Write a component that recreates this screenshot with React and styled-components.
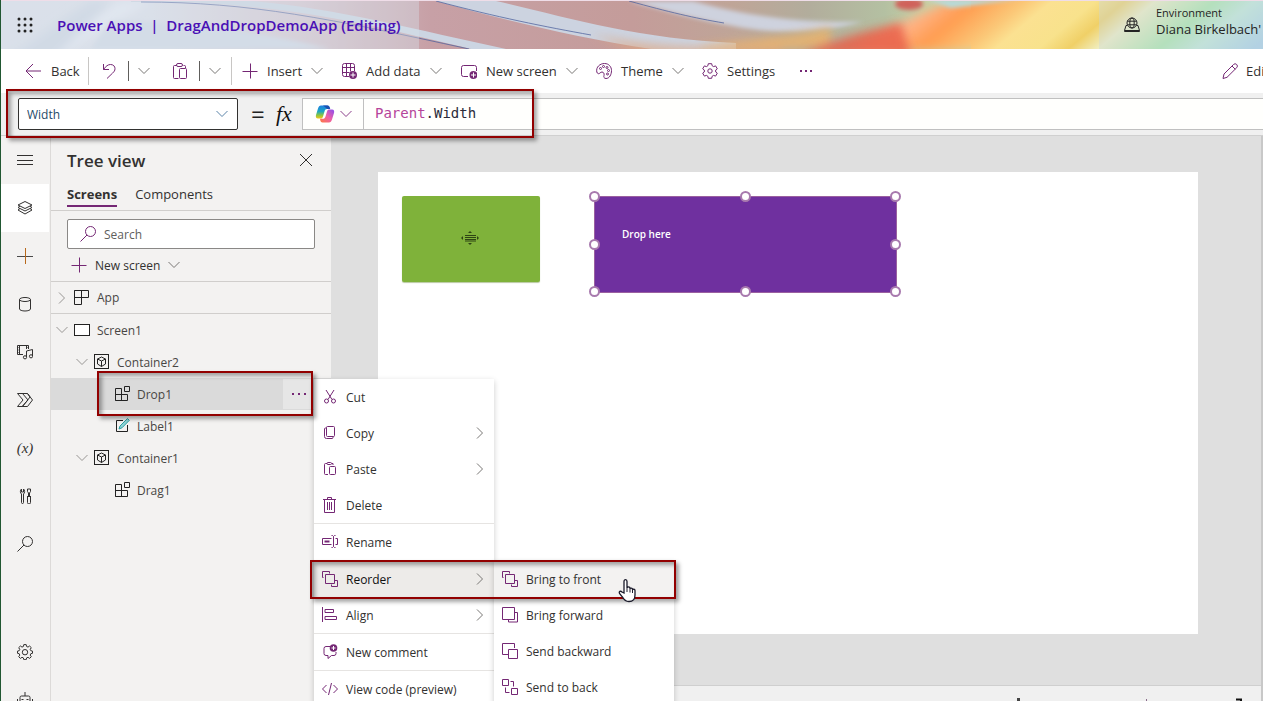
import React from "react";
import styled, { createGlobalStyle, css } from "styled-components";

const Global = createGlobalStyle`
  * { box-sizing: border-box; }
  body { margin: 0; font-family: "Open Sans", "Noto Sans", sans-serif; color: #323130; }
  button, input, select { font: inherit; color: inherit; }
  button { background: none; border: 0; padding: 0; text-align: left; }
`;

const purple = "#742774";

/* ---------- icons ---------- */

const Svg = styled.svg`
  display: block;
  flex: none;
  fill: none;
  stroke: ${(p) => p.$color || "currentColor"};
  stroke-width: 1;
`;

const shapes = {
  waffle: (
    <g fill="#222" stroke="none">
      {[2, 8, 14].map((y) => [2, 8, 14].map((x) => <circle key={x + "-" + y} cx={x} cy={y} r="1.5" />))}
    </g>
  ),
  back: <path d="M16 8H1M8 1 1 8l7 7" />,
  undo: <path d="M1.500 1v5.500H7M1.500 6.500C4 3 6 1.500 8.500 1.500c3 0 4.500 2 4.500 4.200 0 2-1 3-2.500 4.500L5 15.500" />,
  clipboard: (
    <g>
      <path d="M4.500 2.500H2.500a1 1 0 0 0-1 1v11a1 1 0 0 0 1 1h4M11.500 2.500h1a1 1 0 0 1 1 1V5" />
      <rect x="4.500" y="0.500" width="6" height="3" rx="1.500" />
      <rect x="7.500" y="5.500" width="7" height="10" rx="1" />
    </g>
  ),
  plus: <path d="M8.500 .5v15M.5 8.500h15" />,
  railPlus: (
    <g>
      <path d="M0 8.500h16" stroke="#4a4a4a" />
      <path d="M8.500 0v16" stroke="#b8691c" />
    </g>
  ),
  table: (
    <g>
      <path d="M8 13.500H3.500a2 2 0 0 1-2-2v-9a2 2 0 0 1 2-2h8a2 2 0 0 1 2 2V8M5.500 .5v13M9.500 .5v8M1.500 4.500h12M1.500 9.500h7" />
      <circle cx="12" cy="12" r="4" fill={purple} stroke="none" />
      <path d="M12 9.500v5M9.500 12h5" stroke="#fff" />
    </g>
  ),
  screenAdd: (
    <g>
      <path d="M7 13.500H2.500a2 2 0 0 1-2-2v-7a2 2 0 0 1 2-2h11a2 2 0 0 1 2 2V8" />
      <circle cx="12.500" cy="12" r="4" fill={purple} stroke="none" />
      <path d="M12.500 9.500v5M10 12h5" stroke="#fff" />
    </g>
  ),
  theme: (
    <g>
      <path d="M.8 9C-.2 4 4 .5 8.500 .5c4.500 0 7 3.500 7 7 0 4-2 8-5.500 8-2 0-2.500-1.500-2-3 .5-2-.5-3.500-2-3.500S3.500 11 2.300 10.700C1.500 10.500 1 9.700 .8 9Z" />
      <circle cx="4.500" cy="5.500" r="1" /><circle cx="7.500" cy="3.500" r="1" />
      <circle cx="11" cy="4.500" r="1" /><circle cx="12.500" cy="7.500" r="1" /><circle cx="11.500" cy="11" r="1" />
    </g>
  ),
  gear: (
    <g>
      <path d="M6.300 .7h3.400l.4 2 1.500.9 2-.7 1.700 2.900L13.700 7v2l1.600 1.200-1.700 2.900-2-.7-1.500.9-.4 2H6.300l-.4-2-1.500-.9-2 .7L.7 10.200 2.300 9V7L.7 5.800l1.700-2.900 2 .7 1.500-.9Z" strokeLinejoin="round" />
      <circle cx="8" cy="8" r="2.200" />
    </g>
  ),
  cog: (
    <g>
      <path d="M6.800 .6h2.400l.4 1.900 1.400.6 1.600-1.100 1.700 1.700-1.100 1.600.6 1.400 1.700.4v2.200l-1.700.4-.6 1.400 1.100 1.600-1.700 1.700-1.600-1.100-1.400.6-.4 1.800H6.800l-.4-1.800-1.400-.6-1.600 1.100-1.700-1.700 1.100-1.600-.6-1.400L.5 9.300V7.100l1.700-.4.6-1.400-1.100-1.600L3.400 2 5 3.100l1.400-.6Z" strokeLinejoin="round" />
      <circle cx="8" cy="8.200" r="2.700" />
    </g>
  ),
  pencil: <path d="M1 15.500 2 11 11.500 1.500a2 2 0 0 1 3.200 3.200L5 14.300ZM10 3l3.300 3.300" />,
  globe: (
    <g>
      <circle cx="8" cy="6" r="5" />
      <ellipse cx="8" cy="6" rx="2.200" ry="5" />
      <path d="M3.500 4.200h9M3.500 7.800h9M3.200 8.500H2L.5 13.500h15L14 8.500h-1.200M.5 13.500v1h15v-1" />
    </g>
  ),
  menu: <path d="M0 3.500h16M0 8.500h16M0 12.500h16" />,
  layers: (
    <path d="M8 1.500 15 5 8 8.500 1 5ZM3 6 1 7.500 8 11l7-3.500L13 6M3 8.500 1 10l7 4 7-4-2-1.500" />
  ),
  database: (
    <g>
      <ellipse cx="8" cy="3.500" rx="5.500" ry="2" />
      <path d="M2.500 3.500v9.500c0 1 2.500 2 5.500 2s5.500-1 5.500-2V3.500" />
    </g>
  ),
  media: (
    <g>
      <path d="M6 10.500H.5v-9h11V5M2.500 1.500v9M9.500 1.500V5" />
      <path d="M.5 3.500h2M.5 6h2M.5 8.500h2M9.500 3.500h2" strokeDasharray="1 1" />
      <path d="M9.500 13V7l6-1.500V12" />
      <circle cx="8" cy="13.300" r="1.600" /><circle cx="14" cy="12.300" r="1.600" />
    </g>
  ),
  flow: <path d="M.5 1.500h10L15.500 8l-5 6.500H.5L6 8ZM5 14.500 11 8 5.500 1.500M10.500 1.500 13 5 6 14" />,
  tools: (
    <path d="M6.500 6v8.500a1 1 0 0 1-2 0V6C3 5 3 2 4.500 1v3h2V1C8 2 8 5 6.500 6ZM11.500 8V5L10.500 3.500V1h3v2.500L12.500 5v3M10 8.500h4M10.500 8.500v6a1.500 1.500 0 0 0 3 0v-6" />
  ),
  search: (
    <g>
      <circle cx="10.500" cy="5.500" r="5" />
      <path d="M7 9 .5 15.500" />
    </g>
  ),
  bot: (
    <g>
      <path d="M8 0v4M3 8V5.500a1.500 1.500 0 0 1 1.500-1.500h7A1.500 1.500 0 0 1 13 5.500V12H3ZM.5 7v3M15.500 7v3" />
      <path d="M5.500 7v1M10.500 7v1" strokeWidth="2" />
    </g>
  ),
  close: <path d="M2 2l12 12M14 2 2 14" />,
  app: <path d="M.5 .5h14v7H.5ZM.5 .5v14h7V.5" />,
  screen: <rect x=".5" y="2.500" width="15" height="11" fill="#fff" />,
  container: (
    <g>
      <rect x=".5" y=".5" width="14" height="14" />
      <path d="M7.500 3 11.500 5v5l-4 2.500L3.500 10V5ZM3.500 5l4 2 4-2M7.500 7v5.500" />
    </g>
  ),
  component: <path d="M1.500 2.500h6v12h-6ZM1.500 8.500h12v6h-12M10.500 .5h5v5h-5Z" />,
  label: (
    <g>
      <path d="M9 2.500H2.500v11h11V7" />
      <path d="M5 11l1-3 7.500-7.500 1.800 1.800L8 9.800Z" stroke="#2aa0a4" fill="#8fd3d5" />
    </g>
  ),
  cut: (
    <g>
      <path d="M4 1l6 9.500M12 1 6 10.500" />
      <circle cx="4.500" cy="12" r="2" /><circle cx="11.500" cy="12" r="2" />
    </g>
  ),
  copy: (
    <g>
      <rect x="4.500" y="1.500" width="8" height="10" rx="1" />
      <path d="M4.500 3h-1a1 1 0 0 0-1 1v7.500a2 2 0 0 0 2 2H10a1 1 0 0 0 1-1v-1" />
    </g>
  ),
  paste: (
    <g>
      <path d="M5 2.500H3.500a1 1 0 0 0-1 1v9a1 1 0 0 0 1 1H6M10 2.500h1V4" />
      <rect x="5" y="1.500" width="4.500" height="2" rx="1" />
      <rect x="7.500" y="5.500" width="6" height="8" rx="1" />
    </g>
  ),
  trash: <path d="M1 2.500h13M5.500 2.500v-2h4v2M2.500 2.500v13h10v-13M5.500 5v8M7.500 5v8M9.500 5v8" />,
  rename: (
    <g>
      <path d="M9.500 4.500h-9v6h9M13.500 4.500h2v6h-2M9.500 1.500h1l1 1 1-1h1M9.500 13.500h1l1-1 1 1h1M11.500 2.500v10" />
      <path d="M2.500 7.500h5" strokeWidth="2" />
    </g>
  ),
  toFront: <path d="M3.500 3.500h9v9h-9ZM1.500 6.500H.5v-6h7v2M12.500 9.500h3v6h-6v-2" />,
  forward: <path d="M.5 .5h12v12H.5ZM13 5.500h2.500v9.500H6.500v-2" />,
  backward: <path d="M6 11.500H.5v-11h12V5M6.500 6.500h9v9h-9Z" />,
  toBack: <path d="M.5 .5h6v6h-6ZM9.500 9.500h6v6h-6ZM8.500 2.500h3v5M3.500 8.500v5h4" />,
  align: <path d="M.5 0v15M3 2.500h8.500v3H3M3 9.500h11.500v3H3M3 2.500v3M3 9.500v3" />,
  comment: (
    <g>
      <path d="M8 2.500H4a2 2 0 0 0-2 2v5a2 2 0 0 0 2 2h2v3l3.500-3H12a2 2 0 0 0 2-2V8" />
      <circle cx="11.500" cy="4" r="3.800" fill={purple} stroke="none" />
      <path d="M11.500 2v4M9.500 4h4" stroke="#fff" />
    </g>
  ),
  code: <path d="M4.500 4 .5 8l4 4M11.500 4l4 4-4 4M9.500 2l-3 12" />,
};

const Icon = ({ name, size = 16, color }) => (
  <Svg viewBox="0 0 16 16" width={size} height={size} $color={color} aria-hidden="true">
    {shapes[name]}
  </Svg>
);

const ChevronDown = ({ color = "#797775", size = 12 }) => (
  <Svg viewBox="0 0 12 12" width={size} height={size} $color={color} aria-hidden="true">
    <path d="M.5 3 6 8.500 11.500 3" />
  </Svg>
);
const ChevronRight = ({ color = "#797775", size = 12 }) => (
  <Svg viewBox="0 0 12 12" width={size} height={size} $color={color} aria-hidden="true">
    <path d="M3 .5 8.500 6 3 11.500" />
  </Svg>
);
const Dots = ({ gap = 4, color = purple }) => (
  <Svg viewBox="0 0 16 16" width="16" height="16" aria-hidden="true">
    {[-1, 0, 1].map((i) => (
      <rect key={i} x={7 + i * (gap + 2)} y="7" width="2" height="2" fill={color} stroke="none" />
    ))}
  </Svg>
);

const Copilot = () => (
  <svg width="20" height="20" viewBox="0 0 20 20" aria-hidden="true">
    <defs>
      <linearGradient id="cpBlue" x1="0" y1="0" x2="0" y2="1">
        <stop offset="0" stopColor="#1f7fe0" /><stop offset=".45" stopColor="#1aa6c4" />
        <stop offset=".75" stopColor="#8cc63f" /><stop offset="1" stopColor="#f5c518" />
      </linearGradient>
      <linearGradient id="cpPink" x1="1" y1="0" x2="0" y2="1">
        <stop offset="0" stopColor="#8a4df0" /><stop offset=".5" stopColor="#ee5fa6" />
        <stop offset="1" stopColor="#ff7a3d" />
      </linearGradient>
    </defs>
    <path d="M6 1.500h6.500c1.200 0 1.800.7 2.200 2l.5 1.500h-3c-1.500 0-2.200.8-2.700 2.400L8 12.500c-.5 1.500-1 2-2.500 2H3c-2 0-2.500-1.600-2-3.500L3 4.500C3.600 2.500 4.500 1.500 6 1.500Z" fill="url(#cpBlue)" />
    <path d="M14 18.500H7.500c-1.200 0-1.800-.7-2.200-2L5 14.800h2.800c1.500 0 2.200-.8 2.700-2.300L12 7.500c.5-1.500 1-2 2.500-2H17c2 0 2.500 1.600 2 3.500l-2 6.500c-.6 2-1.500 3-3 3Z" fill="url(#cpPink)" />
    <path d="M8 1.500h4.500c1.200 0 1.800.7 2.200 2l.5 1.500h-3L10 3Z" fill="#1c4fb0" />
  </svg>
);

/* ---------- page ---------- */

const Page = styled.div`
  position: relative;
  display: flex;
  flex-direction: column;
  height: 100vh;
  overflow: hidden;
  border-left: 1px solid #215732;
  background: #f0f0f0;
`;

const Header = styled.header`
  position: relative;
  display: flex;
  align-items: center;
  flex: none;
  height: 49px;
  border-top: 1px solid #efdde8;
  overflow: hidden;
`;
const Banner = styled.svg`
  position: absolute;
  inset: 0;
  width: 100%;
  height: 100%;
`;
const Waffle = styled.button`
  position: relative;
  margin: 0 24px 0 16px;
`;
const AppTitle = styled.h1`
  position: relative;
  margin: 0;
  flex: 1;
  font-size: 15px;
  line-height: 24px;
  font-weight: 600;
  color: #4a10b5;
  white-space: pre;
`;
const Environment = styled.div`
  position: relative;
  display: flex;
  align-items: center;
  gap: 16px;
  width: 164px;
  height: 100%;
  padding-left: 25px;
  background: rgba(200, 215, 220, 0.4);
  color: #242424;
  white-space: nowrap;
`;
const EnvText = styled.div`
  padding-bottom: 8px;
  font-size: 13px;
  line-height: 16px;
  small { display: block; font-size: 11px; line-height: 16px; }
`;

const Toolbar = styled.nav`
  display: flex;
  align-items: center;
  flex: none;
  height: 44px;
  padding-left: 24px;
  background: #fff;
`;
const Command = styled.button`
  display: flex;
  align-items: center;
  flex: none;
  gap: ${(p) => p.$gap || 9}px;
  width: ${(p) => p.$width}px;
  height: 32px;
  font-size: 13px;
  line-height: 20px;
  white-space: nowrap;
`;
const Rule = styled.span`
  flex: none;
  width: 1px;
  height: ${(p) => (p.$short ? 20 : 28)}px;
  margin-right: ${(p) => p.$after}px;
  background: ${(p) => (p.$short ? "#605e5c" : "#c8c6c4")};
`;
const Spacer = styled.span`
  flex: 1;
`;

const FormulaBar = styled.div`
  display: flex;
  align-items: center;
  flex: none;
  height: 43px;
  padding: 0 0 1px 17px;
  background: #f0f0f0;
  border-bottom: 1px solid #d0d0d0;
`;
const Property = styled.label`
  display: grid;
  align-items: center;
  flex: none;
  width: 220px;
  svg { grid-area: 1 / 1; justify-self: end; margin-right: 10px; pointer-events: none; }
`;
const PropertySelect = styled.select`
  grid-area: 1 / 1;
  height: 32px;
  padding: 2px 8px 0;
  appearance: none;
  border: 1px solid #323130;
  border-radius: 2px;
  background: #fff;
  font-size: 12px;
  color: #1f4a68;
`;
const Equals = styled.span`
  width: 38px;
  padding-left: 13px;
  font-size: 24px;
  line-height: 24px;
  color: #222;
`;
const Fx = styled.span`
  width: 26px;
  font-family: "Liberation Serif", serif;
  font-style: italic;
  font-size: 22px;
  line-height: 24px;
  color: #111;
`;
const CopilotButton = styled.button`
  display: flex;
  align-items: center;
  justify-content: center;
  gap: 5px;
  flex: none;
  width: 62px;
  height: 32px;
  border: 1px solid #c0c0c0;
  background: #fffffd;
`;
const Formula = styled.div`
  flex: 1;
  height: 32px;
  padding-left: 11px;
  border: solid #c0c0c0;
  border-width: 1px 0;
  background: #fffffd;
  font-family: "DejaVu Sans Mono", monospace;
  font-size: 14px;
  line-height: 29px;
  color: #2b2b3a;
  outline: 0;
  span { color: #b5449a; }
`;

const Body = styled.div`
  display: flex;
  flex: 1;
  min-height: 0;
`;
const Rail = styled.nav`
  flex: none;
  width: 50px;
  overflow: hidden;
  background: #f3f2f1;
  border-right: 1px solid #dcdad8;
`;
const RailButton = styled.button`
  display: flex;
  align-items: center;
  justify-content: center;
  width: 48px;
  height: 48px;
  margin-top: ${(p) => (p.$apart ? 60 : 0)}px;
  background: ${(p) => (p.$active ? "#fff" : "transparent")};
  font-family: "Liberation Serif", serif;
  font-size: 15px;
  line-height: 16px;
  font-style: italic;
`;

const Tree = styled.aside`
  flex: none;
  width: 280px;
  background: #f3f2f1;
`;
const TreeHead = styled.div`
  display: flex;
  align-items: center;
  justify-content: space-between;
  height: 48px;
  padding: 0 17px 0 16px;
`;
const TreeTitle = styled.h2`
  margin: 0;
  padding-top: 2px;
  font-size: 17px;
  line-height: 24px;
  font-weight: 600;
`;
const Tabs = styled.div`
  display: flex;
  align-items: flex-start;
  gap: 18px;
  height: 27px;
  padding-left: 16px;
  border-bottom: 1px solid #d0cecc;
`;
const Tab = styled.button`
  height: 23px;
  font-size: 13px;
  line-height: 21px;
  border-bottom: 2px solid ${(p) => (p.$active ? purple : "transparent")};
  font-weight: ${(p) => (p.$active ? 700 : 400)};
`;
const SearchBox = styled.label`
  display: flex;
  align-items: center;
  gap: 8px;
  height: 30px;
  margin: 8px 16px 0;
  padding: 0 12px;
  border: 1px solid #8a8886;
  border-radius: 2px;
  background: #fff;
`;
const SearchInput = styled.input`
  flex: 1;
  min-width: 0;
  padding: 0;
  border: 0;
  outline: 0;
  background: none;
  font-size: 12px;
  &::placeholder { color: #605e5c; opacity: 1; }
`;
const NewScreen = styled.button`
  display: flex;
  align-items: center;
  gap: 8px;
  width: 100%;
  height: 33px;
  padding-left: 20px;
  border-bottom: 1px solid #d0cecc;
  font-size: 12px;
`;
const TreeRow = styled.div`
  display: flex;
  align-items: center;
  height: 32px;
  padding-left: ${(p) => 5 + p.$level * 20}px;
  font-size: 12px;
  color: #484644;
  ${(p) => p.$ruled && css`border-bottom: 1px solid #d0cecc;`}
  ${(p) => p.$selected && css`background: #dadada;`}
`;
const Toggle = styled.span`
  width: 18px;
`;
const RowName = styled.span`
  flex: 1;
  padding-left: 7px;
`;
const RowMore = styled.button`
  display: flex;
  align-items: center;
  width: 48px;
  height: 30px;
  padding-left: 8px;
  background: #e6e6e6;
`;

const Work = styled.main`
  display: flex;
  flex-direction: column;
  flex: 1;
  min-width: 0;
  border-right: 2px solid #c8c8c8;
`;
const Canvas = styled.div`
  display: flex;
  flex: 1;
  padding: 36px 63px 51px 47px;
  background: #dfdfdf;
`;
const Artboard = styled.div`
  display: flex;
  align-items: flex-start;
  gap: 54px;
  flex: 1;
  padding: 24px;
  background: #fff;
`;
const DragCard = styled.div`
  display: flex;
  align-items: center;
  justify-content: center;
  width: 138px;
  height: 86px;
  padding: 0 2px 2px 0;
  border-radius: 2px;
  background: #7fb23a;
  box-shadow: 0 1px 1px #b8c8a0;
`;
const DropZone = styled.div`
  position: relative;
  width: 303px;
  height: 97px;
  padding: 27px;
  border: 1px solid #9a60a0;
  background: #6f309f;
  font-size: 10px;
  line-height: 20px;
  font-weight: 600;
  color: #fff;
`;
const Handle = styled.span`
  position: absolute;
  left: ${(p) => p.$x}%;
  top: ${(p) => p.$y}%;
  width: 11px;
  height: 11px;
  margin: -6px;
  border: 2px solid #a87aae;
  border-radius: 50%;
  background: #fff;
`;
const Status = styled.footer`
  display: flex;
  justify-content: flex-end;
  flex: none;
  height: 16px;
  border-top: 1px solid #cfcfcf;
  background: #f0f0f0;
`;

/* ---------- menus and overlays ---------- */

const Menu = styled.div`
  position: absolute;
  left: ${(p) => p.$left}px;
  top: ${(p) => p.$top}px;
  width: 180px;
  background: #fff;
  box-shadow: 0 2px 6px rgba(0, 0, 0, 0.2);
`;
const MenuItem = styled.button`
  display: flex;
  align-items: center;
  gap: 8px;
  width: 100%;
  height: 36px;
  padding: 0 8px;
  font-size: 12px;
  background: ${(p) => (p.$active ? p.$tint || "#edebe9" : "transparent")};
  color: ${(p) => (p.$active && !p.$tint ? "#111" : "#323130")};
  span { flex: 1; }
`;
const MenuRule = styled.div`
  height: 1px;
  background: #e6e4e2;
`;
const Highlight = styled.div`
  position: absolute;
  left: ${(p) => p.$left}px;
  top: ${(p) => p.$top}px;
  width: ${(p) => p.$width}px;
  height: ${(p) => p.$height}px;
  border: 2px solid #920000;
  box-shadow: 3px 3px 4px rgba(0, 0, 0, 0.35), inset 3px 3px 4px rgba(0, 0, 0, 0.35);
  pointer-events: none;
`;
const Cursor = styled.svg`
  position: absolute;
  left: 615px;
  top: 578px;
`;

const BannerArt = () => (
  <Banner viewBox="0 0 1262 48" preserveAspectRatio="none" aria-hidden="true">
    <defs>
      <linearGradient id="base">
        <stop offset="0" stopColor="#dce0e9" /><stop offset=".12" stopColor="#dcdfe8" />
        <stop offset=".24" stopColor="#d5c5cd" /><stop offset=".34" stopColor="#c7a0a6" />
        <stop offset=".5" stopColor="#c49c9a" /><stop offset=".58" stopColor="#bfa598" />
        <stop offset=".64" stopColor="#b2ad9c" /><stop offset=".7" stopColor="#b4c0a2" />
        <stop offset=".73" stopColor="#c6cfa4" /><stop offset="1" stopColor="#bcdedd" />
      </linearGradient>
      <linearGradient id="glow" gradientUnits="userSpaceOnUse" x1="880" y1="0" x2="1056" y2="211">
        <stop offset="0" stopColor="#e88a68" /><stop offset=".06" stopColor="#fba488" />
        <stop offset=".13" stopColor="#ffb488" /><stop offset=".22" stopColor="#ff9c50" />
        <stop offset=".34" stopColor="#fbc878" /><stop offset=".4" stopColor="#fbe191" />
        <stop offset=".5" stopColor="#f8e28c" /><stop offset=".57" stopColor="#f0d067" />
        <stop offset=".64" stopColor="#f0eec0" />
        <stop offset=".78" stopColor="#a8e6a8" /><stop offset=".87" stopColor="#bfe8d8" />
        <stop offset="1" stopColor="#a5cee8" />
      </linearGradient>
      <filter id="soft" x="-20%" y="-50%" width="140%" height="200%"><feGaussianBlur stdDeviation="5" /></filter>
      <filter id="edge" x="-20%" y="-50%" width="140%" height="200%"><feGaussianBlur stdDeviation="2" /></filter>
    </defs>
    <rect width="1262" height="48" fill="url(#base)" />
    <path d="M120 0 0 60h50L150 0Z" fill="#e6eaf3" filter="url(#soft)" />
    <path d="M0 60 90 0h20L50 60Z" fill="#cdd6e2" filter="url(#soft)" />
    <path d="M110 20C190 20 260 32 330 48H90Z" fill="#d0d9e5" filter="url(#edge)" />
    <path d="M130 0h120C330 6 420 30 505 48H470C400 32 330 12 230 4 200 1 160 1 130 1Z" fill="#ccd5e2" />
    <path d="M435 0h60c70 16 140 38 240 42v6H650C570 36 500 18 435 0Z" fill="#ccd3e0" />
    <path d="M590 33c60 14 120 16 190 8v14H640Z" fill="#e0a882" opacity=".7" filter="url(#soft)" />
    <path d="M628 0h64c50 14 100 22 170 21-50 12-90 12-130 4-35-6-70-16-104-25Z" fill="#ced2de" filter="url(#edge)" />
    <path d="M140 1c110 0 190 17 328 47M435 0c60 16 110 26 155 34M628 0c40 11 65 17 95 22" fill="none" stroke="#4c609c" strokeWidth="1" opacity=".75" />
    <path d="M700 46c50-8 90-10 130-20v22H700Z" fill="#eab36d" opacity=".85" filter="url(#soft)" />
    <path d="M950 0C920 12 890 26 850 50h425V0Z" fill="url(#glow)" filter="url(#soft)" />
    <rect x="970" width="292" height="48" fill="url(#glow)" />
    <path d="M800 54c40-18 70-26 100-32l10 32Z" fill="#e8604a" opacity=".85" filter="url(#soft)" />
    <ellipse cx="908" cy="3" rx="14" ry="6" fill="#d0625c" filter="url(#edge)" />
    <path d="M925 -2h95l-70 9Z" fill="#b8dad8" filter="url(#edge)" />
    <rect width="418" height="48" fill="#d8e2ec" opacity=".4" />
  </Banner>
);

const commands = [
  { icon: "plus", label: "Insert", width: 99, menu: true },
  { icon: "table", label: "Add data", width: 120, menu: true },
  { icon: "screenAdd", label: "New screen", width: 135, menu: true },
  { icon: "theme", label: "Theme", width: 106, menu: true },
  { icon: "gear", label: "Settings", width: 96 },
];

const rail = [
  { icon: "menu", label: "Expand" },
  { icon: "layers", label: "Tree view", active: true },
  { icon: "railPlus", label: "Insert" },
  { icon: "database", label: "Data" },
  { icon: "media", label: "Media" },
  { icon: "flow", label: "Power Automate" },
  { text: "(x)", label: "Variables" },
  { icon: "tools", label: "Advanced tools" },
  { icon: "search", label: "Search" },
  { icon: "cog", label: "Settings", apart: true },
  { icon: "bot", label: "Virtual agent" },
];

const tree = [
  { level: 0, toggle: "closed", icon: "app", name: "App", ruled: true },
  { level: 0, toggle: "open", icon: "screen", name: "Screen1" },
  { level: 1, toggle: "open", icon: "container", name: "Container2" },
  { level: 2, icon: "component", name: "Drop1", selected: true },
  { level: 2, icon: "label", name: "Label1" },
  { level: 1, toggle: "open", icon: "container", name: "Container1" },
  { level: 2, icon: "component", name: "Drag1" },
];

const menu = [
  { icon: "cut", label: "Cut" },
  { icon: "copy", label: "Copy", sub: true },
  { icon: "paste", label: "Paste", sub: true },
  { icon: "trash", label: "Delete" },
  null,
  { icon: "rename", label: "Rename" },
  null,
  { icon: "toFront", label: "Reorder", sub: true, active: true },
  { icon: "align", label: "Align", sub: true },
  null,
  { icon: "comment", label: "New comment" },
  null,
  { icon: "code", label: "View code (preview)" },
];

const reorder = [
  { icon: "toFront", label: "Bring to front", active: true, tint: "#f3f2f1" },
  { icon: "forward", label: "Bring forward" },
  { icon: "backward", label: "Send backward" },
  { icon: "toBack", label: "Send to back" },
];

const handles = [[0, 0], [50, 0], [100, 0], [0, 50], [100, 50], [0, 100], [50, 100], [100, 100]];

const MenuList = ({ items, ...rest }) => (
  <Menu {...rest}>
    {items.map((it, i) =>
      it ? (
        <MenuItem key={i} $active={it.active} $tint={it.tint}>
          <Icon name={it.icon} color={purple} />
          <span>{it.label}</span>
          {it.sub && <ChevronRight />}
        </MenuItem>
      ) : (
        <MenuRule key={i} />
      )
    )}
  </Menu>
);

export default function App() {
  return (
    <Page>
      <Global />
      <Header>
        <BannerArt />
        <Waffle aria-label="App launcher"><Icon name="waffle" /></Waffle>
        <AppTitle>Power Apps  |  DragAndDropDemoApp (Editing)</AppTitle>
        <Environment>
          <Icon name="globe" />
          <EnvText><small>Environment</small>Diana Birkelbach'</EnvText>
        </Environment>
      </Header>

      <Toolbar>
        <Command $width={63} $gap={10}><Icon name="back" color={purple} />Back</Command>
        <Rule $after={13} />
        <Command $width={26} aria-label="Undo"><Icon name="undo" color={purple} /></Command>
        <Rule $short $after={9} />
        <Command $width={34} aria-label="Undo options"><ChevronDown /></Command>
        <Command $width={27} aria-label="Paste"><Icon name="clipboard" color={purple} /></Command>
        <Rule $short $after={9} />
        <Command $width={22} aria-label="Paste options"><ChevronDown /></Command>
        <Rule $after={10} />
        {commands.map((c) => (
          <Command key={c.label} $width={c.width}>
            <Icon name={c.icon} color={purple} />
            {c.label}
            {c.menu && <ChevronDown />}
          </Command>
        ))}
        <Command $width={16} aria-label="More"><Dots gap={3} /></Command>
        <Spacer />
        <Command $width={41} $gap={8}><Icon name="pencil" color={purple} />Edi</Command>
      </Toolbar>

      <FormulaBar>
        <Property>
          <PropertySelect aria-label="Property" defaultValue="Width"><option>Width</option></PropertySelect>
          <ChevronDown color="#5a83a8" />
        </Property>
        <Equals>=</Equals>
        <Fx>fx</Fx>
        <CopilotButton aria-label="Copilot"><Copilot /><ChevronDown color="#8a3f8a" /></CopilotButton>
        <Formula role="textbox" aria-label="Formula" contentEditable suppressContentEditableWarning spellCheck={false}>
          <span>Parent</span>.Width
        </Formula>
      </FormulaBar>

      <Body>
        <Rail>
          {rail.map((r) => (
            <RailButton key={r.label} $active={r.active} $apart={r.apart} aria-label={r.label}>
              {r.icon ? <Icon name={r.icon} /> : r.text}
            </RailButton>
          ))}
        </Rail>
        <Tree>
          <TreeHead>
            <TreeTitle>Tree view</TreeTitle>
            <button aria-label="Close"><Icon name="close" /></button>
          </TreeHead>
          <Tabs>
            <Tab $active>Screens</Tab>
            <Tab>Components</Tab>
          </Tabs>
          <SearchBox>
            <Icon name="search" color={purple} />
            <SearchInput type="text" placeholder="Search" aria-label="Search" />
          </SearchBox>
          <NewScreen><Icon name="plus" color={purple} />New screen<ChevronDown /></NewScreen>
          {tree.map((n) => (
            <TreeRow key={n.name} $level={n.level} $ruled={n.ruled} $selected={n.selected}>
              <Toggle>
                {n.toggle === "open" && <ChevronDown color="#979593" />}
                {n.toggle === "closed" && <ChevronRight color="#979593" />}
              </Toggle>
              <Icon name={n.icon} color="#222" />
              <RowName>{n.name}</RowName>
              {n.selected && <RowMore aria-label="More actions"><Dots gap={4} /></RowMore>}
            </TreeRow>
          ))}
        </Tree>
        <Work>
          <Canvas>
            <Artboard>
              <DragCard>
                <svg width="18" height="14" viewBox="0 0 18 14" aria-hidden="true">
                  <path d="M4 4.500h11M4 6.500h11M4 8.500h11M4 10h11" stroke="#2e4414" fill="none" />
                  <path d="M9 0 11 2H7ZM9 14l2-2H7ZM0 7l2-2v4ZM18 7l-2-2v4Z" fill="#2e4414" />
                </svg>
              </DragCard>
              <DropZone>
                Drop here
                {handles.map(([x, y]) => <Handle key={x + "-" + y} $x={x} $y={y} />)}
              </DropZone>
            </Artboard>
          </Canvas>
          <Status>
            <svg width="260" height="16" viewBox="0 0 260 16" aria-hidden="true">
              <path d="M17.500 12v4" stroke="#444" strokeWidth="3" />
              <path d="M145.500 13v3" stroke="#8a6a8a" />
              <path d="M235 13.500h5v3" stroke="#111" strokeWidth="2" fill="none" />
            </svg>
          </Status>
        </Work>
      </Body>

      <MenuList items={menu} $left={313} $top={379} />
      <MenuList items={reorder} $left={493} $top={561} />

      <Highlight $left={5} $top={89} $width={528} $height={49} />
      <Highlight $left={96} $top={371} $width={216} $height={45} />
      <Highlight $left={309} $top={560} $width={366} $height={39} />

      <Cursor width="22" height="26" viewBox="0 0 22 26" aria-hidden="true">
        <path d="M8 15V3.500C8 1 11 1 11 3.500V10c0-1.500 3-1.500 3 0v1c0-1.300 2.500-1.300 2.500.3v.7c0-1.200 2.500-1 2.500.5V17c0 4-2 6.500-6 6.500-3.500 0-5-1.500-6.500-4.500L3.500 15.500c-1-2 1-3 2.500-1.500Z" fill="#fff" stroke="#1a1a2a" strokeWidth="1.300" />
        <path d="M11 10v4M14 11v3.500M16.500 12v3" stroke="#1a1a2a" />
      </Cursor>
    </Page>
  );
}
